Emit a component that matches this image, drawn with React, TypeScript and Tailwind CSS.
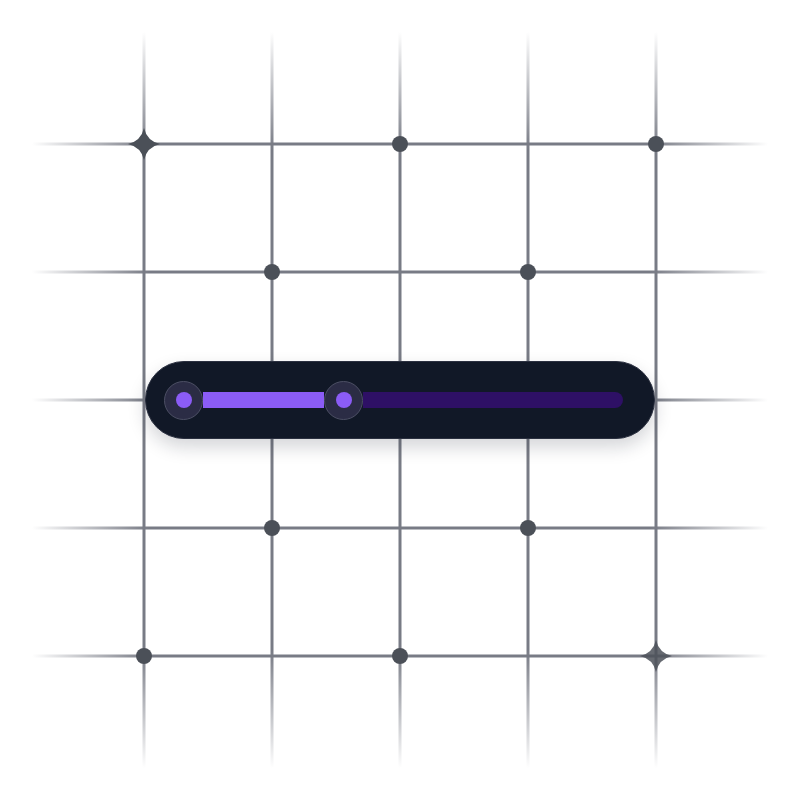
import React from "react";

const LINES = [144, 272, 400, 528, 656];

const DOTS: [number, number][] = [
  [400, 144],
  [656, 144],
  [272, 272],
  [528, 272],
  [272, 528],
  [528, 528],
  [144, 656],
  [400, 656],
];

const Star = ({ x, y, opacity = 1 }: { x: number; y: number; opacity?: number }) => (
  <path
    transform={`translate(${x} ${y})`}
    d="M0,-16 Q3,-3 16,0 Q3,3 0,16 Q-3,3 -16,0 Q-3,-3 0,-16 Z"
    fill="#4b5058"
    opacity={opacity}
  />
);

const GridBackdrop = () => (
  <svg
    className="absolute inset-0"
    width="800"
    height="800"
    viewBox="0 0 800 800"
    aria-hidden
  >
    <defs>
      <linearGradient id="fadeH" x1="32" y1="0" x2="768" y2="0" gradientUnits="userSpaceOnUse">
        <stop offset="0" stopColor="#787b85" stopOpacity="0" />
        <stop offset="0.16" stopColor="#787b85" stopOpacity="1" />
        <stop offset="0.84" stopColor="#787b85" stopOpacity="1" />
        <stop offset="1" stopColor="#787b85" stopOpacity="0" />
      </linearGradient>
      <linearGradient id="fadeV" x1="0" y1="32" x2="0" y2="768" gradientUnits="userSpaceOnUse">
        <stop offset="0" stopColor="#787b85" stopOpacity="0" />
        <stop offset="0.16" stopColor="#787b85" stopOpacity="1" />
        <stop offset="0.84" stopColor="#787b85" stopOpacity="1" />
        <stop offset="1" stopColor="#787b85" stopOpacity="0" />
      </linearGradient>
    </defs>
    {LINES.map((p) => (
      <rect key={`h${p}`} x="32" y={p - 1.5} width="736" height="3" fill="url(#fadeH)" />
    ))}
    {LINES.map((p) => (
      <rect key={`v${p}`} x={p - 1.5} y="32" width="3" height="736" fill="url(#fadeV)" />
    ))}
    {DOTS.map(([x, y]) => (
      <circle key={`${x}-${y}`} cx={x} cy={y} r="8" fill="#4b5058" />
    ))}
    <Star x={144} y={144} />
    <Star x={656} y={656} opacity={0.85} />
  </svg>
);

const Thumb = () => (
  <div className="w-[39px] h-[39px] rounded-full bg-[#2b2c45] border border-[#4c4f64] flex items-center justify-center shrink-0">
    <div className="w-4 h-4 rounded-full bg-[#8b5cf6]" />
  </div>
);

const RangeSlider = () => (
  <div className="w-[510px] h-[78px] rounded-full bg-[#111827] border border-[#2b3040] shadow-[0_8px_18px_rgba(17,24,39,0.18)] flex items-center pl-[18px] pr-[31px]">
    <Thumb />
    <div className="w-[121px] h-4 bg-[#8b5cf6] shrink-0" />
    <Thumb />
    <div className="flex-1 h-4 rounded-r-full bg-[#2e1065]" />
  </div>
);

export default function App() {
  return (
    <div className="relative w-[800px] h-[800px] bg-white overflow-hidden">
      <GridBackdrop />
      <div className="relative w-full h-full flex items-center justify-center">
        <RangeSlider />
      </div>
    </div>
  );
}
